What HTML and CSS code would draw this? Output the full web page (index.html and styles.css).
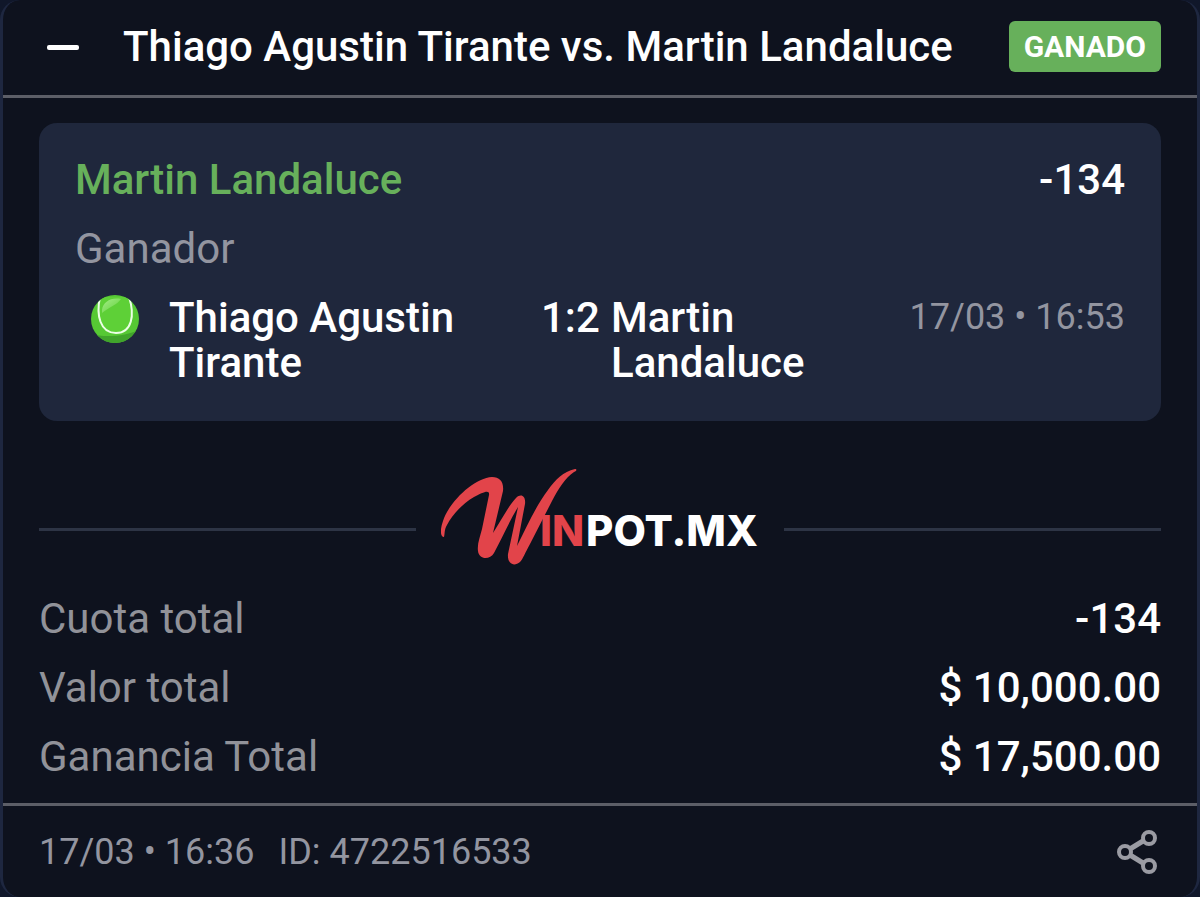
FILE: index.html
```html
<!DOCTYPE html>
<html lang="es-MX">
<head>
    <meta charset="UTF-8">
    <meta name="viewport" content="width=device-width, initial-scale=1.0">
    <title>Winpot.mx - Apuesta</title>
    <link rel="stylesheet" href="styles.css">
</head>
<body>
    <main class="ticket">
        <header class="ticket-header">
            <button class="icon-btn toggle-btn" type="button" aria-label="Contraer">
                <svg width="32" height="6" viewBox="0 0 32 6"><rect y="1" width="32" height="5" rx="2" fill="#fff"/></svg>
            </button>
            <h1 class="title">Thiago Agustin Tirante vs. Martin Landaluce</h1>
            <span class="badge">GANADO</span>
        </header>

        <section class="selection">
            <div class="row">
                <span class="pick">Martin Landaluce</span>
                <span class="value">-134</span>
            </div>
            <p class="market">Ganador</p>
            <div class="match">
                <svg class="ball" width="48" height="48" viewBox="0 0 48 48">
                    <defs>
                        <linearGradient id="shine" x1="0" y1="0" x2="1" y2="1">
                            <stop offset="0" stop-color="#a5ed89"/>
                            <stop offset="1" stop-color="#5ed037"/>
                        </linearGradient>
                        <clipPath id="round"><circle cx="24" cy="24" r="24"/></clipPath>
                    </defs>
                    <g clip-path="url(#round)">
                        <rect width="48" height="48" fill="#56c834"/>
                        <path d="M0 39C15 43 35 41 48 35V48H0Z" fill="#40a42b"/>
                        <path d="M9 2C5 20 9 38 25 38 41 38 44 20 38 2Z" fill="#5ed037"/>
                        <path d="M11 15C12 7 20 2 30 4 26 10 18 12 11 18Z" fill="url(#shine)"/>
                        <path d="M9 2C5 20 9 38 25 38 41 38 44 20 38 2" fill="none" stroke="#ecffe6" stroke-width="2"/>
                    </g>
                </svg>
                <span class="team">Thiago Agustin Tirante</span>
                <span class="score">1:2</span>
                <span class="team">Martin Landaluce</span>
                <time class="date">17/03 • 16:53</time>
            </div>
        </section>

        <div class="brand">
            <svg class="logo" width="318" height="98" viewBox="0 0 318 98" role="img" aria-label="Winpot.mx">
                <path d="M3 68C-1 68-1 60 2 52 8 33 33 9 51 8 59 8 63 13 62 22L52 64C61 50 68 36 75 29 80 24 85 27 84 35L76 77C87 55 95 37 107 21 115 10 122 3 134 0 136 0 136 2 133 3 124 9 118 19 111 32L89 75C84 84 82 90 79 93 73 98 66 95 67 85L77 38C68 53 61 69 53 84 49 91 38 91 37 82 36 75 39 68 41 60L48 26C49 20 42 23 33 28 21 35 11 46 6 56 3 61 4 65 3 68Z" fill="#e2444a"/>
                <text class="logo-red" x="99" y="77">IN</text>
                <text class="logo-white" x="145" y="77">POT.MX</text>
            </svg>
        </div>

        <dl class="totals">
            <div class="row">
                <dt>Cuota total</dt>
                <dd class="value">-134</dd>
            </div>
            <div class="row">
                <dt>Valor total</dt>
                <dd class="value">$ 10,000.00</dd>
            </div>
            <div class="row">
                <dt>Ganancia Total</dt>
                <dd class="value">$ 17,500.00</dd>
            </div>
        </dl>

        <footer class="ticket-footer">
            <time class="date">17/03 • 16:36</time>
            <span class="date">ID: 4722516533</span>
            <button class="icon-btn share-btn" type="button" aria-label="Compartir">
                <svg width="46" height="46" viewBox="0 0 46 46" fill="none" stroke="#9a9ba3">
                    <path d="M15 20 28 12M15 26 28 34" stroke-width="5"/>
                    <g stroke-width="4">
                        <circle cx="10" cy="23" r="6"/>
                        <circle cx="34" cy="9" r="6"/>
                        <circle cx="34" cy="37" r="6"/>
                    </g>
                </svg>
            </button>
        </footer>
    </main>
</body>
</html>
```
FILE: styles.css
```css
* {
    box-sizing: border-box;
}

body {
    margin: 0;
    background-color: #10172a;
    color: white;
    font-family: Roboto, sans-serif;
    font-size: 42px;
    line-height: 46px;
}

.ticket {
    display: flex;
    flex-direction: column;
    min-height: 100vh;
    background-color: #0e121e;
    border: solid #1e2740;
    border-width: 0 3px;
    border-radius: 20px;
}

.ticket-header {
    display: flex;
    align-items: center;
    padding: 21px 36px 23px;
    border-bottom: 3px solid #5c5e67;
}

.icon-btn {
    display: flex;
    padding: 0;
    border: none;
    background: none;
    cursor: pointer;
}

.toggle-btn {
    margin: 0 44px 0 8px;
}

.title {
    flex: 1;
    margin: 0;
    font-size: 42px;
    font-weight: 500;
}

.badge {
    padding: 3px 15px 2px;
    border-radius: 6px;
    background-color: #67b05b;
    font-size: 30px;
    font-weight: 700;
}

.selection {
    margin: 25px 36px 0;
    padding: 34px 36px 36px;
    border-radius: 18px;
    background-color: #1f273c;
}

.row {
    display: flex;
    justify-content: space-between;
}

.pick {
    color: #67b05b;
    font-weight: 500;
}

.value {
    margin: 0;
    font-weight: 500;
}

.market {
    margin: 23px 0;
    color: #9395a0;
}

.match {
    display: grid;
    grid-template-columns: 78px 372px 70px 1fr auto;
    line-height: 45px;
    font-weight: 500;
    margin-left: 16px;
}

.team {
    max-width: 300px;
}

.date {
    color: #9395a0;
    font-size: 36px;
    font-weight: 400;
}

.brand {
    display: flex;
    align-items: center;
    gap: 25px;
    margin: 48px 36px 0;
}

.brand::before,
.brand::after {
    content: "";
    flex: 1;
    height: 3px;
    margin-top: 22px;
    background-color: #2d3445;
}

.logo text {
    font-family: Inter, sans-serif;
    font-size: 42px;
    font-weight: 800;
}

.logo-red {
    fill: #e2444a;
}

.logo-white {
    fill: white;
}

.totals {
    display: flex;
    flex-direction: column;
    gap: 23px;
    margin: 29px 36px 23px;
}

.totals dt {
    color: #919299;
}

.ticket-footer {
    display: flex;
    flex: 1;
    align-items: center;
    gap: 24px;
    padding: 0 36px;
    border-top: 3px solid #5c5e67;
}

.share-btn {
    margin-left: auto;
}
```
